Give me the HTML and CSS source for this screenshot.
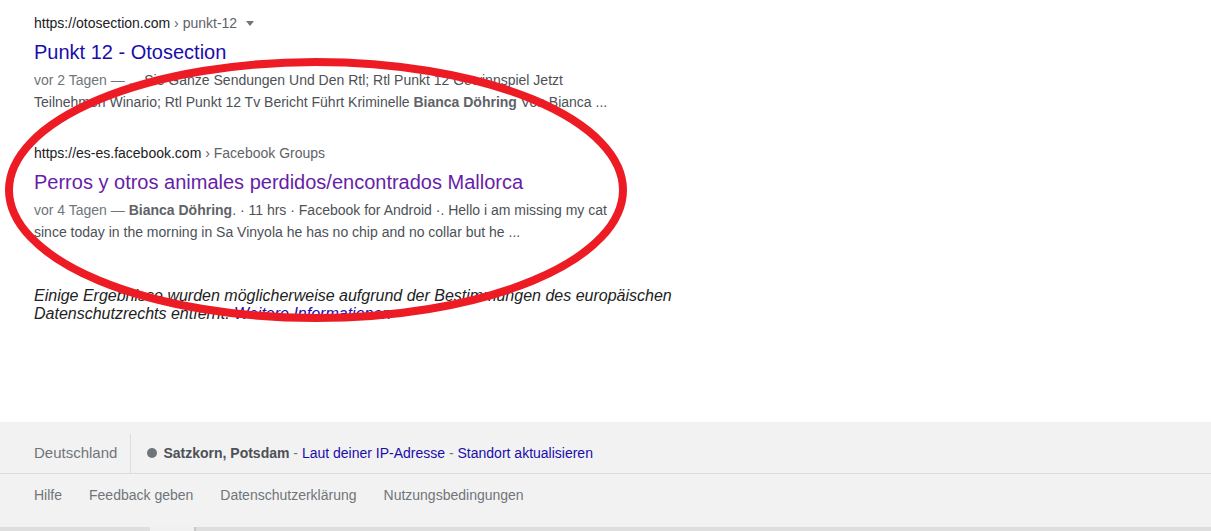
FILE: index.html
```html
<!DOCTYPE html>
<html lang="de">
<head>
<meta charset="utf-8">
<title>Suchergebnisse</title>
<link rel="stylesheet" href="styles.css">
</head>
<body>
<main class="results">
  <div class="result first">
    <div class="cite"><span class="domain">https://otosection.com</span><span class="crumb"> › punkt-12</span><span class="caret"></span></div>
    <a class="title" href="#">Punkt 12 - Otosection</a>
    <div class="snippet"><span class="date">vor 2 Tagen — </span>... Sie Ganze Sendungen Und Den Rtl; Rtl Punkt 12 Gewinnspiel Jetzt Teilnehmen Winario; Rtl Punkt 12 Tv Bericht Führt Kriminelle <b>Bianca Döhring</b> Von Bianca ...</div>
  </div>
  <div class="result second">
    <div class="cite"><span class="domain">https://es-es.facebook.com</span><span class="crumb"> › Facebook Groups</span></div>
    <a class="title visited" href="#">Perros y otros animales perdidos/encontrados Mallorca</a>
    <div class="snippet"><span class="date">vor 4 Tagen — </span><b>Bianca Döhring</b>. · 11 hrs · Facebook for Android ·. Hello i am missing my cat since today in the morning in Sa Vinyola he has no chip and no collar but he ...</div>
  </div>
  <p class="notice">Einige Ergebnisse wurden möglicherweise aufgrund der Bestimmungen des europäischen Datenschutzrechts entfernt. <a href="#">Weitere Informationen</a></p>
</main>
<footer class="footer">
  <div class="loc-row">
    <span class="country">Deutschland</span>
    <span class="location"><span class="dot"></span><b>Satzkorn, Potsdam</b> - <a href="#">Laut deiner IP-Adresse</a> - <a href="#">Standort aktualisieren</a></span>
  </div>
  <div class="links-row">
    <a href="#">Hilfe</a>
    <a href="#">Feedback geben</a>
    <a href="#">Datenschutzerklärung</a>
    <a href="#">Nutzungsbedingungen</a>
  </div>
  <div class="bottom-strip"><span class="seg"></span></div>
</footer>
<svg class="annotation" width="1211" height="531" viewBox="0 0 1211 531" aria-hidden="true">
  <ellipse cx="316" cy="190" rx="307" ry="128" fill="none" stroke="#ed1c24" stroke-width="8"/>
</svg>
</body>
</html>
```
FILE: styles.css
```css
html, body {
  margin: 0;
  padding: 0;
  background: #fff;
  font-family: Arial, "Liberation Sans", sans-serif;
  height: 531px;
  overflow: hidden;
}
body {
  display: flex;
  flex-direction: column;
  position: relative;
}
a { text-decoration: none; }

.results {
  padding: 12px 0 0 34px;
  height: 410px;
  box-sizing: border-box;
}
.result { width: 600px; }
.second { margin-top: 29px; }

.cite {
  font-size: 14px;
  line-height: 22px;
  height: 22px;
  display: flex;
  align-items: center;
  white-space: pre;
}
.domain { color: #202124; }
.crumb { color: #5f6368; }
.caret {
  width: 0;
  height: 0;
  border-left: 4px solid transparent;
  border-right: 4px solid transparent;
  border-top: 5px solid #70757a;
  margin-left: 9px;
  margin-top: 1px;
}

.title {
  display: block;
  margin-top: 5px;
  font-size: 20px;
  line-height: 26px;
  color: #1a0dab;
}
.title.visited { color: #681da8; }

.snippet {
  margin-top: 4px;
  font-size: 14px;
  line-height: 22px;
  color: #4d5156;
}
.snippet b { color: #5f6368; }
.date { color: #70757a; }

.notice {
  margin: 44px 0 0;
  width: 652px;
  font-size: 16px;
  line-height: 18px;
  font-style: italic;
  color: #222;
}
.notice a { color: #1a0dab; }

.footer {
  margin-top: 12px;
  background: #f2f2f2;
  flex: 1;
  display: flex;
  flex-direction: column;
}
.loc-row {
  height: 52px;
  border-bottom: 1px solid #dadce0;
  box-sizing: border-box;
  display: flex;
  align-items: stretch;
  padding: 12px 0 0 34px;
}
.country {
  font-size: 15px;
  color: #70757a;
  padding-right: 13px;
  border-right: 1px solid #dadce0;
  display: flex;
  align-items: center;
  padding-bottom: 2px;
}
.location {
  font-size: 14px;
  color: #70757a;
  padding-left: 16px;
  display: flex;
  align-items: center;
  white-space: pre;
  padding-bottom: 2px;
}
.location b { color: #4d5156; }
.location a { color: #1a0dab; }
.dot {
  width: 10px;
  height: 10px;
  border-radius: 50%;
  background: #70757a;
  margin-right: 6px;
}
.links-row {
  height: 42px;
  display: flex;
  align-items: center;
  gap: 27px;
  padding-left: 34px;
  font-size: 14px;
}
.links-row a { color: #70757a; }

.bottom-strip {
  margin-top: auto;
  height: 4px;
  background: #dedede;
  display: flex;
}
.seg {
  margin-left: 150px;
  width: 44px;
  background: #f0f0f0;
  border-right: 2px solid #c8c8c8;
}

.annotation {
  position: absolute;
  left: 0;
  top: 0;
  pointer-events: none;
}
```
